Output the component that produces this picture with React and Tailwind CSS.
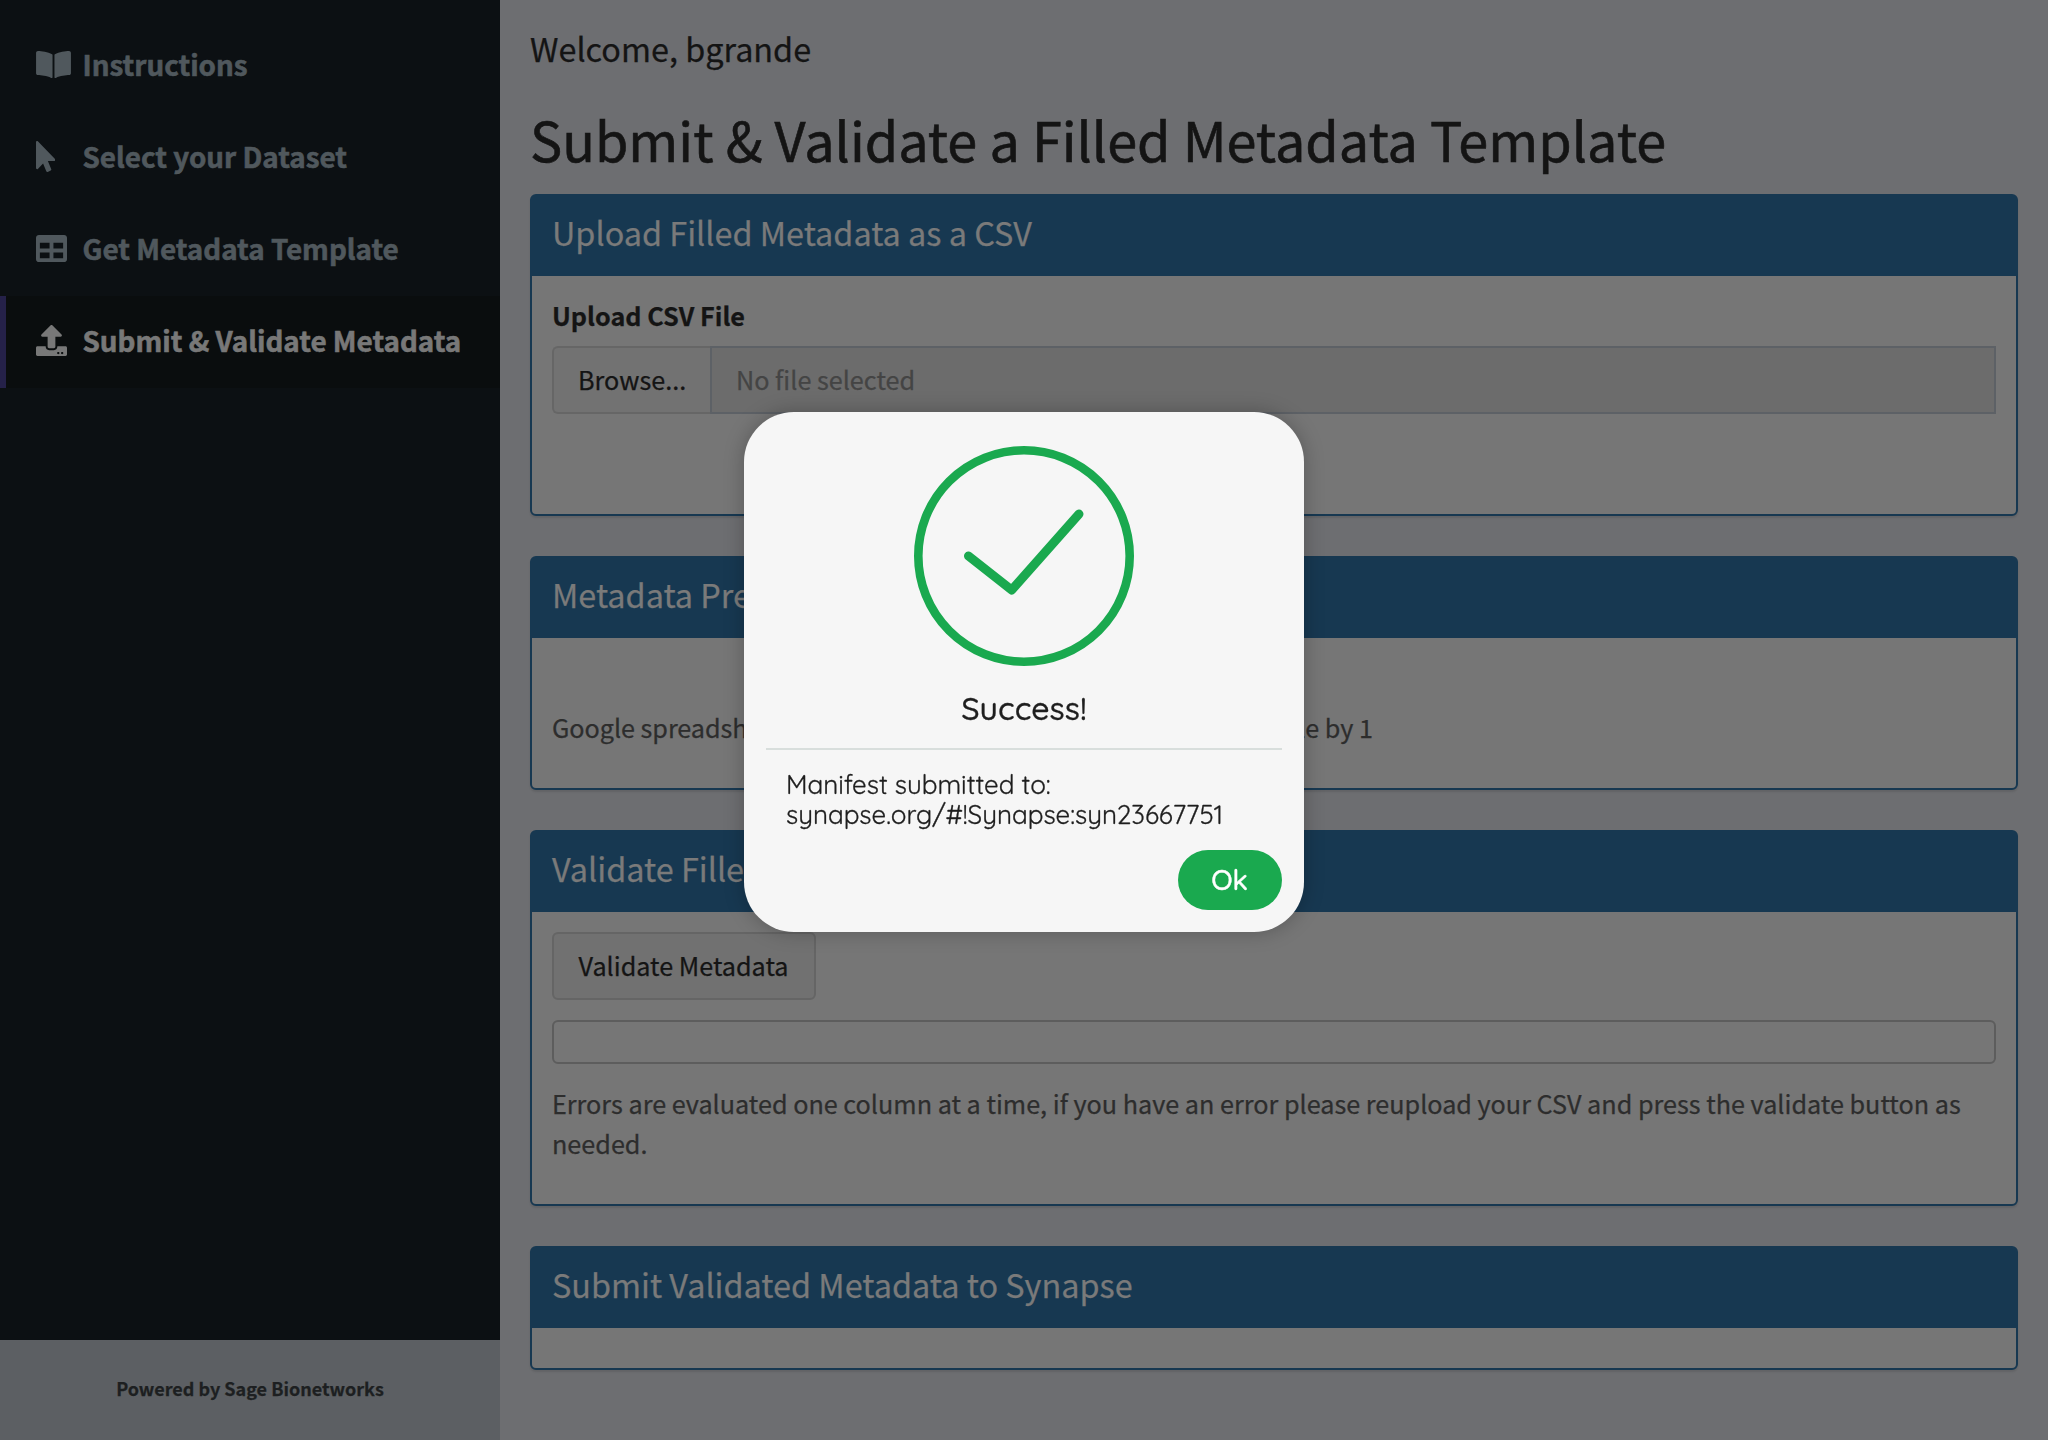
import { FaBookOpen, FaMousePointer, FaTable, FaUpload } from "react-icons/fa";

const NAV = [
  { label: "Instructions", Icon: FaBookOpen, iconClass: "h-[31px] w-[35px]" },
  { label: "Select your Dataset", Icon: FaMousePointer, iconClass: "h-[31px] w-[19.4px]" },
  { label: "Get Metadata Template", Icon: FaTable, iconClass: "h-[31px] w-[31px]" },
  { label: "Submit & Validate Metadata", Icon: FaUpload, iconClass: "h-[31px] w-[31px]", active: true },
];

function Sidebar() {
  return (
    <aside className="flex h-full w-[500px] shrink-0 flex-col bg-[#0c1013]">
      <nav className="flex flex-1 flex-col pt-5">
        {NAV.map(({ label, Icon, iconClass, active }) => (
          <a
            key={label}
            className={
              active
                ? "flex h-[92px] items-center border-l-[6px] border-[#252149] bg-[#0a0d0e] pb-1 pl-[30px] text-[#787878]"
                : "flex h-[92px] items-center border-l-[6px] border-transparent pb-1 pl-[30px] text-[#50585d]"
            }
          >
            <span className="flex w-[46.5px] shrink-0">
              <Icon className={iconClass} />
            </span>
            <span className="text-[27.8px] leading-[40px] font-bold whitespace-nowrap [-webkit-text-stroke:0.6px]">
              {label}
            </span>
          </a>
        ))}
      </nav>
      <footer className="h-[100px] bg-[#5c5f63] text-center text-[18px] leading-[96px] font-bold text-[#1d1f21]">
        Powered by Sage Bionetworks
      </footer>
    </aside>
  );
}

function Box({ title, className, children }) {
  return (
    <section className={`mb-10 flex flex-col rounded-[6px] border-2 border-[#173851] bg-[#767676] shadow-[0_2px_2px_rgba(0,0,0,0.1)] ${className}`}>
      <h3 className="h-20 shrink-0 bg-[#173851] px-5 pt-[18px] text-[32.4px] leading-9 whitespace-nowrap text-[#7a7a7a]">
        {title}
      </h3>
      <div className="flex flex-1 flex-col items-start px-5">{children}</div>
    </section>
  );
}

function SuccessDialog() {
  return (
    <div className="fixed inset-0 flex items-start justify-center pt-[412px]">
      <div className="flex h-[520px] w-[560px] flex-col rounded-[50px] bg-[#f6f6f6] px-[22px] pt-[34px] font-['Quicksand','Lato',sans-serif] text-[#1e1e1e] shadow-[0_0_20px_rgba(0,0,0,0.25)]">
        <svg className="mx-auto size-[220px]" viewBox="0 0 220 220" fill="none" stroke="#1aa94f">
          <circle cx="110" cy="110" r="105.7" strokeWidth="8.6" />
          <path d="M54.5 110 97.7 144 165 68" strokeWidth="9" strokeLinecap="round" strokeLinejoin="round" />
        </svg>
        <h2 className="mt-[22px] text-center text-[32px] leading-10 font-medium [-webkit-text-stroke:0.3px]">Success!</h2>
        <div className="mt-5 h-0.5 shrink-0 bg-[#d8dedc]" />
        <p className="mt-5 px-5 text-[26px] leading-[30px] whitespace-nowrap tracking-[-0.03px] [-webkit-text-stroke:0.3px]">
          <span className="block">Manifest submitted to:</span>
          <span className="block">synapse.org/#!Synapse:syn23667751</span>
        </p>
        <button className="mt-5 h-[60px] w-[104px] self-end rounded-full bg-[#1aa94f] pr-px text-[28px] leading-[60px] font-medium text-white [-webkit-text-stroke:0.4px]">
          Ok
        </button>
      </div>
    </div>
  );
}

export default function App() {
  return (
    <div className="flex h-[1440px] w-[2048px] overflow-hidden bg-[#6d6e71] font-['Noto_Sans_CJK_SC',sans-serif] text-[25.2px] text-[#141414] [-webkit-text-stroke:0.25px]">
      <Sidebar />
      <main className="flex-1 px-[30px] pt-[30px]">
        <h2 className="text-[32.4px] leading-9">Welcome, bgrande</h2>
        <h1 className="mt-[43px] mb-[25px] text-[54px] leading-[60px] whitespace-nowrap [-webkit-text-stroke:0.6px]">
          Submit &amp; Validate a Filled Metadata Template
        </h1>

        <Box title="Upload Filled Metadata as a CSV" className="h-[322px]">
          <label className="mt-[21px] mb-[13px] leading-9 font-bold">Upload CSV File</label>
          <div className="flex h-[68px] w-full">
            <button className="w-[158px] rounded-l-[6px] border-2 border-r-0 border-[#666666] bg-[#727272] pb-0.5 pl-6 text-left leading-[62px]">
              Browse...
            </button>
            <div className="flex-1 border-2 border-[#5d6166] bg-[#6c6c6c] pl-6 leading-[62px] text-[#444444]">
              No file selected
            </div>
          </div>
        </Box>

        <Box title="Metadata Preview" className="h-[234px]">
          <p className="mt-[69px] leading-10 tracking-[-0.04px] text-[#2d2d2d]">
            Google spreadsheet row numbers are incremented from this table by 1
          </p>
        </Box>

        <Box title="Validate Filled Metadata" className="h-[376px]">
          <button className="mt-5 h-[68px] w-[264px] rounded-[6px] border-2 border-[#656565] bg-[#717171] pr-[7px] pb-0.5 pl-1.5 whitespace-nowrap leading-[62px]">
            Validate Metadata
          </button>
          <div className="mt-5 h-11 w-full rounded-[6px] border-2 border-[#5d5d5d]" />
          <p className="mt-[19px] leading-10 text-[#2d2d2d]">
            Errors are evaluated one column at a time, if you have an error please reupload your CSV and press the
            validate button as needed.
          </p>
        </Box>

        <Box title="Submit Validated Metadata to Synapse" className="h-[124px]" />
      </main>
      <SuccessDialog />
    </div>
  );
}
